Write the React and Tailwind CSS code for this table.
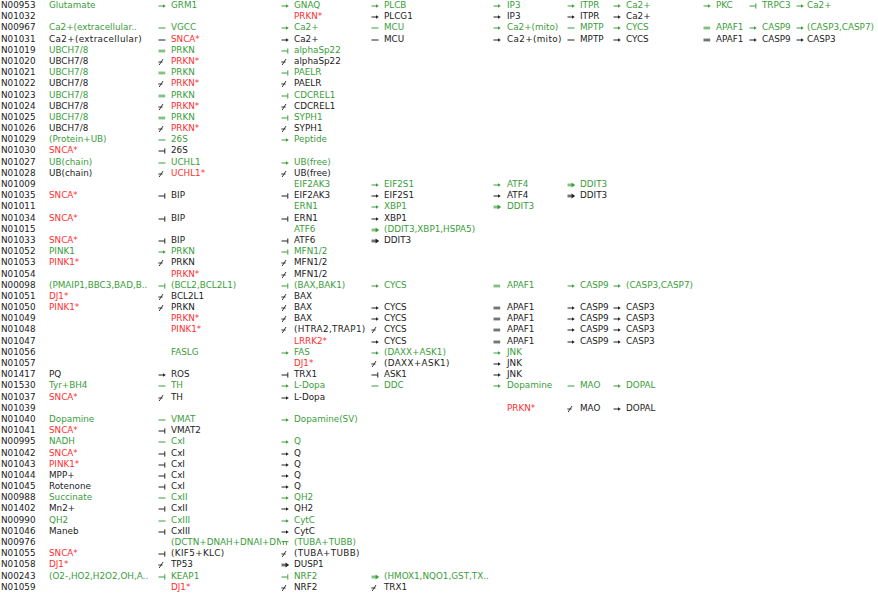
// pathway table: ID, then up to 10 nodes joined by relation glyphs
const GRID =
  "grid grid-cols-[49px_109px_13px_110px_13px_77px_13px_109px_14px_60px_13px_33px_13px_77px_13px_33px_13px_34px_11px_71px] h-[11.2px] leading-[11.2px]";

// prefix: > act, - bind, = complex, | inhibit, / lost, d double arrow, p pi, . none
const rows = [
  ["N00953", "g", ["Glutamate", ">GRM1", ">GNAQ", ">PLCB", ">IP3", ">ITPR", ">Ca2+", ">PKC", "|TRPC3", ">Ca2+"]],
  ["N01032", "k", ["", "", ".PRKN*", ">PLCG1", ">IP3", ">ITPR", ">Ca2+"]],
  ["N00967", "g", ["Ca2+(extracellular..", "-VGCC", ">Ca2+", "-MCU", ">Ca2+(mito)", "-MPTP", ">CYCS", "=APAF1", ">CASP9", ">(CASP3,CASP7)"]],
  ["N01031", "k", ["Ca2+(extracellular)", "-SNCA*", ">Ca2+", "-MCU", ">Ca2+(mito)", "-MPTP", ">CYCS", "=APAF1", ">CASP9", ">CASP3"]],
  ["N01019", "g", ["UBCH7/8", "=PRKN", "|alphaSp22"]],
  ["N01020", "k", ["UBCH7/8", "/PRKN*", "/alphaSp22"]],
  ["N01021", "g", ["UBCH7/8", "=PRKN", "|PAELR"]],
  ["N01022", "k", ["UBCH7/8", "/PRKN*", "/PAELR"]],
  ["N01023", "g", ["UBCH7/8", "=PRKN", "|CDCREL1"]],
  ["N01024", "k", ["UBCH7/8", "/PRKN*", "/CDCREL1"]],
  ["N01025", "g", ["UBCH7/8", "=PRKN", "|SYPH1"]],
  ["N01026", "k", ["UBCH7/8", "/PRKN*", "/SYPH1"]],
  ["N01029", "g", ["(Protein+UB)", "-26S", ">Peptide"]],
  ["N01030", "k", ["SNCA*", "|26S"]],
  ["N01027", "g", ["UB(chain)", "-UCHL1", ">UB(free)"]],
  ["N01028", "k", ["UB(chain)", "/UCHL1*", "/UB(free)"]],
  ["N01009", "g", ["", "", ".EIF2AK3", ">EIF2S1", ">ATF4", "dDDIT3"]],
  ["N01035", "k", ["SNCA*", "|BIP", "|EIF2AK3", ">EIF2S1", ">ATF4", "dDDIT3"]],
  ["N01011", "g", ["", "", ".ERN1", ">XBP1", "dDDIT3"]],
  ["N01034", "k", ["SNCA*", "|BIP", "|ERN1", ">XBP1"]],
  ["N01015", "g", ["", "", ".ATF6", "d(DDIT3,XBP1,HSPA5)"]],
  ["N01033", "k", ["SNCA*", "|BIP", "|ATF6", "dDDIT3"]],
  ["N01052", "g", ["PINK1", ">PRKN", "|MFN1/2"]],
  ["N01053", "k", ["PINK1*", "/PRKN", "/MFN1/2"]],
  ["N01054", "k", ["", ".PRKN*", "/MFN1/2"]],
  ["N00098", "g", ["(PMAIP1,BBC3,BAD,B..", "|(BCL2,BCL2L1)", "|(BAX,BAK1)", ">CYCS", "=APAF1", ">CASP9", ">(CASP3,CASP7)"]],
  ["N01051", "k", ["DJ1*", "/BCL2L1", "/BAX"]],
  ["N01050", "k", ["PINK1*", "/PRKN", "/BAX", ">CYCS", "=APAF1", ">CASP9", ">CASP3"]],
  ["N01049", "k", ["", ".PRKN*", "/BAX", ">CYCS", "=APAF1", ">CASP9", ">CASP3"]],
  ["N01048", "k", ["", ".PINK1*", "/(HTRA2,TRAP1)", "/CYCS", "=APAF1", ">CASP9", ">CASP3"]],
  ["N01047", "k", ["", "", ".LRRK2*", ">CYCS", "=APAF1", ">CASP9", ">CASP3"]],
  ["N01056", "g", ["", ".FASLG", ">FAS", ">(DAXX+ASK1)", ">JNK"]],
  ["N01057", "k", ["", "", ".DJ1*", "/(DAXX+ASK1)", ">JNK"]],
  ["N01417", "k", ["PQ", ">ROS", "|TRX1", "|ASK1", ">JNK"]],
  ["N01530", "g", ["Tyr+BH4", "-TH", ">L-Dopa", "-DDC", ">Dopamine", "-MAO", ">DOPAL"]],
  ["N01037", "k", ["SNCA*", "/TH", ">L-Dopa"]],
  ["N01039", "k", ["", "", "", "", ".PRKN*", "/MAO", ">DOPAL"]],
  ["N01040", "g", ["Dopamine", "-VMAT", ">Dopamine(SV)"]],
  ["N01041", "k", ["SNCA*", "|VMAT2"]],
  ["N00995", "g", ["NADH", "-CxI", ">Q"]],
  ["N01042", "k", ["SNCA*", "|CxI", ">Q"]],
  ["N01043", "k", ["PINK1*", "|CxI", ">Q"]],
  ["N01044", "k", ["MPP+", "|CxI", ">Q"]],
  ["N01045", "k", ["Rotenone", "|CxI", ">Q"]],
  ["N00988", "g", ["Succinate", "-CxII", ">QH2"]],
  ["N01402", "k", ["Mn2+", "|CxII", ">QH2"]],
  ["N00990", "g", ["QH2", "-CxIII", ">CytC"]],
  ["N01046", "k", ["Maneb", "|CxIII", ">CytC"]],
  ["N00976", "g", ["", ".(DCTN+DNAH+DNAI+DNAL)", "p(TUBA+TUBB)"]],
  ["N01055", "k", ["SNCA*", "|(KIF5+KLC)", "/(TUBA+TUBB)"]],
  ["N01058", "k", ["DJ1*", "/TP53", "dDUSP1"]],
  ["N00243", "g", ["(O2-,HO2,H2O2,OH,A..", "|KEAP1", "|NRF2", "d(HMOX1,NQO1,GST,TX.."]],
  ["N01059", "k", ["", ".DJ1*", "/NRF2", "/TRX1"]],
];

function Rel({ kind }) {
  if (kind === "." || !kind) return null;
  return (
    <svg width="9" height="11" viewBox="0 0 9 11" className="block" fill="currentColor" stroke="currentColor">
      {kind === ">" && (
        <>
          <line x1="0.5" y1="6" x2="5.5" y2="6" strokeWidth="1" />
          <path d="M5 4.2 L7.8 6 L5 7.8 Z" stroke="none" />
        </>
      )}
      {kind === "-" && <line x1="0.5" y1="6" x2="7.5" y2="6" strokeWidth="1" />}
      {kind === "=" && (
        <>
          <line x1="0.5" y1="5.2" x2="7.2" y2="5.2" strokeWidth="0.9" />
          <line x1="0.5" y1="6.8" x2="7.2" y2="6.8" strokeWidth="0.9" />
        </>
      )}
      {kind === "|" && (
        <>
          <line x1="0.5" y1="6" x2="6.5" y2="6" strokeWidth="1" />
          <line x1="6.8" y1="3.4" x2="6.8" y2="8.6" strokeWidth="1" />
        </>
      )}
      {kind === "/" && (
        <>
          <line x1="1.2" y1="9" x2="5" y2="3" strokeWidth="0.9" />
          <line x1="0.3" y1="6" x2="4.6" y2="6" strokeWidth="0.9" />
        </>
      )}
      {kind === "d" && (
        <>
          <line x1="0.5" y1="5.2" x2="5" y2="5.2" strokeWidth="0.9" />
          <line x1="0.5" y1="6.8" x2="5" y2="6.8" strokeWidth="0.9" />
          <path d="M4.6 3.6 L8.2 6 L4.6 8.4 Z" stroke="none" />
        </>
      )}
      {kind === "p" && (
        <>
          <line x1="0.5" y1="4.6" x2="7.5" y2="4.6" strokeWidth="1" />
          <line x1="2.6" y1="4.6" x2="2.3" y2="8.2" strokeWidth="0.9" />
          <line x1="5.4" y1="4.6" x2="5.4" y2="8.2" strokeWidth="0.9" />
        </>
      )}
    </svg>
  );
}

function Name({ text, clip, tone }) {
  const red = text.endsWith("*");
  // the grey (disease) variants of compound names are drawn a bit looser
  const loose = tone === "k" && !red && text.includes("(") && /[+,]/.test(text);
  return (
    <div
      className={`whitespace-nowrap ${clip ? "overflow-hidden" : ""} ${red ? "text-[#ff3030]" : ""} ${
        loose ? "tracking-[0.35px]" : ""
      }`}
    >
      {text}
    </div>
  );
}

function Row({ id, tone, cells }) {
  const [first, ...rest] = cells;
  const slots = Array.from({ length: 9 }, (_, i) => rest[i] || "");
  return (
    <div className={`${GRID} ${tone === "g" ? "text-[#3a9d3a]" : "text-[#222222]"}`}>
      <div className="pl-[1px] text-[#222222]">{id}</div>
      <Name text={first} tone={tone} />
      {slots.map((s, i) => (
        <div key={i} className="contents">
          <div>
            <Rel kind={s ? s[0] : null} />
          </div>
          <Name text={s ? s.slice(1) : ""} tone={tone} clip={i === 0} />
        </div>
      ))}
    </div>
  );
}

export default function App() {
  return (
    <div className="w-[878px] h-[594px] overflow-hidden bg-white text-[8.8px] font-['DejaVu_Sans',sans-serif]">
      {rows.map(([id, tone, cells]) => (
        <Row key={id} id={id} tone={tone} cells={cells} />
      ))}
    </div>
  );
}
